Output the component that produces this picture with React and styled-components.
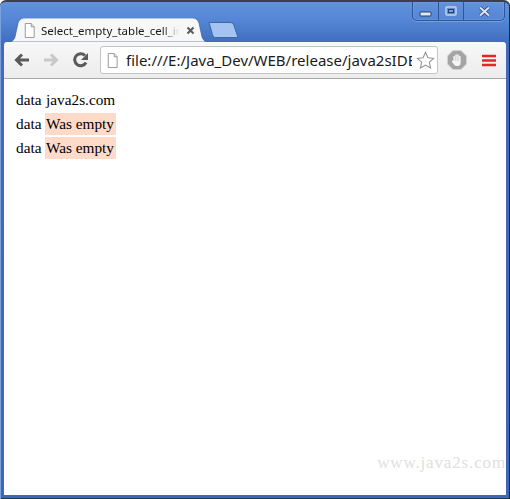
import styled, { createGlobalStyle } from "styled-components";

const Global = createGlobalStyle`
  html, body {
    margin: 0;
    padding: 0;
    background: #fff;
  }
`;

const Win = styled.div`
  width: 510px;
  height: 499px;
  box-sizing: border-box;
  display: flex;
  flex-direction: column;
  position: relative;
  overflow: hidden;
  padding: 0 4px 4px 4px;
  border-radius: 6px 6px 0 0;
  border-top: 2px solid #3a3f4a;
  background: linear-gradient(#6292dc 0, #5486d6 18px, #3f6cbc 42px, #3b68b8 100%);
  box-shadow: inset -1px 0 #26282e, inset 1px 0 #7ba0dc, inset 0 -1px #26384f;
`;

const TitleBar = styled.div`
  height: 40px;
  flex: none;
  display: flex;
  align-items: flex-end;
  padding-left: 5px;
`;

const Tab = styled.div`
  position: relative;
  width: 199px;
  height: 24px;
  display: flex;
  align-items: center;
  padding: 0 0 0 15px;
  box-sizing: border-box;
`;

const TabShape = styled.svg`
  position: absolute;
  left: 0;
  top: 0;
`;

const TabTitle = styled.span`
  position: relative;
  width: 138px;
  margin-left: 6px;
  overflow: hidden;
  white-space: nowrap;
  font: 11.5px "Noto Sans", "Liberation Sans", sans-serif;
  color: #1a1a1a;
  -webkit-mask-image: linear-gradient(to right, #000 122px, transparent 138px);
  mask-image: linear-gradient(to right, #000 122px, transparent 138px);
`;

const CloseX = styled.svg`
  position: relative;
  flex: none;
  margin-left: 7px;
`;

const NewTab = styled.svg`
  margin: 0 0 4px 0;
`;

const Controls = styled.div`
  position: absolute;
  top: 0;
  right: 5px;
  display: flex;
  height: 18px;
  box-sizing: content-box;
  border: 1px solid #2e5596;
  border-top: none;
  border-radius: 0 0 5px 5px;
  box-shadow: 0 1px rgba(190, 210, 245, 0.35), inset 0 0 0 1px rgba(160, 190, 235, 0.2);
`;

const Ctl = styled.div`
  width: ${(p) => p.$w}px;
  box-sizing: border-box;
  display: flex;
  align-items: center;
  justify-content: center;
  border-left: ${(p) => (p.$first ? "none" : "1px solid #2e5596")};
`;

const MinIcon = styled.svg`
  margin-top: 6px;
`;

const Toolbar = styled.div`
  height: 37px;
  flex: none;
  display: flex;
  align-items: center;
  box-sizing: border-box;
  padding: 0 0 0 10px;
  background: linear-gradient(#f8f8f8, #ececec);
  border-bottom: 1px solid #a9a9a9;
  border-radius: 3px 3px 0 0;
`;

const NavIcon = styled.svg`
  flex: none;
  margin-right: ${(p) => p.$mr}px;
`;

const Omnibox = styled.div`
  width: 338px;
  height: 28px;
  flex: none;
  box-sizing: border-box;
  background: #fff;
  border: 1px solid #c4c4c4;
  border-radius: 3px;
  display: flex;
  align-items: center;
  padding-left: 6px;
  margin-right: 9px;
`;

const Url = styled.div`
  width: 286px;
  margin: 0 4px 0 8px;
  overflow: hidden;
  white-space: nowrap;
  font: 15px "Noto Sans", "Liberation Sans", sans-serif;
  color: #1b1b1b;
`;

const Page = styled.div`
  flex: 1;
  position: relative;
  background: #fff;
  padding: 8px 8px 8px 9px;
  font: 15.3px/20px "Liberation Serif", "Times New Roman", serif;
  color: #000;
`;

const Table = styled.table`
  border-spacing: 2px;
  border-collapse: separate;
`;

const Cell = styled.td`
  padding: 1px;
  background: ${(p) => (p.$empty ? "#ffdac9" : "transparent")};
`;

const LabelCell = styled(Cell)`
  width: 26px;
`;

const Watermark = styled.div`
  position: absolute;
  right: 0;
  bottom: 22px;
  font: 17px "Liberation Serif", "Times New Roman", serif;
  letter-spacing: 0.85px;
  color: #e0e0e0;
`;

const DocSvg = styled.svg`
  flex: none;
  position: relative;
`;

const StarSvg = styled.svg`
  flex: none;
`;

const Doc = () => (
  <DocSvg width="11" height="15" viewBox="0 0 13 16" preserveAspectRatio="none">
    <path d="M1.5.5h7l3.5 3.5v11.500h-10.500z" fill="#fff" stroke="#8f8f8f" />
    <path d="M8.500.5v3.500h3.500" fill="#e8e8e8" stroke="#8f8f8f" />
  </DocSvg>
);

export default function App() {
  return (
    <Win>
      <Global />
      <TitleBar>
        <Tab>
          <TabShape width="199" height="24" viewBox="0 0 199 24">
            <path
              d="M0 24c3 0 5-2 6-5l3-14c1-3 3-5 6-5h169c3 0 5 2 6 5l3 14c1 3 3 5 6 5z"
              fill="#f7f7f7"
              stroke="#3a5f9e"
              strokeWidth="0.7"
            />
          </TabShape>
          <Doc />
          <TabTitle>Select_empty_table_cell_in</TabTitle>
          <CloseX width="9" height="9" viewBox="0 0 9 9">
            <path d="M1.500 1.500l6 6M7.500 1.500l-6 6" stroke="#5a5a5a" strokeWidth="2" />
          </CloseX>
        </Tab>
        <NewTab width="31" height="16" viewBox="0 0 31 16">
          <path
            d="M1 .5h21c2 0 3 1 4 3l4 12H7c-1 0-2-1-2.500-3z"
            fill="#a5c3f0"
            stroke="#3f66a8"
          />
        </NewTab>
      </TitleBar>
      <Controls>
        <Ctl $first $w={25}>
          <MinIcon width="13" height="6" viewBox="0 0 13 6">
            <rect x="1" y="1" width="11" height="4" rx="1" fill="#dfe8f6" stroke="#2a3f66" />
          </MinIcon>
        </Ctl>
        <Ctl $w={25}>
          <svg width="12" height="10" viewBox="0 0 12 10">
            <rect x="1" y="1" width="10" height="8" rx="1" fill="none" stroke="#c3d3ec" strokeWidth="1.500" />
            <rect x="3.500" y="3.500" width="5" height="3" fill="#7ea0d6" stroke="#2a3f66" />
          </svg>
        </Ctl>
        <Ctl $w={41}>
          <svg width="13" height="11" viewBox="0 0 13 11">
            <path d="M2 1.500l9 8M11 1.500l-9 8" stroke="#2a3f66" strokeWidth="3.600" />
            <path d="M2 1.500l9 8M11 1.500l-9 8" stroke="#d8e2f3" strokeWidth="2.200" />
          </svg>
        </Ctl>
      </Controls>
      <Toolbar>
        <NavIcon $mr={13} width="16" height="14" viewBox="0 0 16 14">
          <path d="M15 7H3M8 1.500L2.500 7 8 12.500" fill="none" stroke="#5a5a5a" strokeWidth="3" />
        </NavIcon>
        <NavIcon $mr={14} width="16" height="14" viewBox="0 0 16 14">
          <path d="M1 7h12M8 1.500L13.500 7 8 12.500" fill="none" stroke="#c8c8c8" strokeWidth="3" />
        </NavIcon>
        <NavIcon $mr={11} width="16" height="16" viewBox="0 0 16 16">
          <path d="M13 10.500A6 6 0 1 1 12 3.500" fill="none" stroke="#5a5a5a" strokeWidth="3" />
          <path d="M15 1v7H8z" fill="#5a5a5a" />
        </NavIcon>
        <Omnibox>
          <Doc />
          <Url>file:///E:/Java_Dev/WEB/release/java2sIDE</Url>
          <StarSvg width="19" height="18" viewBox="0 0 22 21">
            <path
              d="M11 1.500l2.800 6.300 6.700.7-5 4.600 1.400 6.700-5.900-3.400-5.900 3.400 1.400-6.700-5-4.600 6.700-.7z"
              fill="#fff"
              stroke="#8e8e8e"
              strokeWidth="1.200"
            />
          </StarSvg>
        </Omnibox>
        <NavIcon $mr={15} width="20" height="20" viewBox="0 0 20 20">
          <path d="M6 .5h8L19.500 6v8L14 19.500H6L.5 14V6z" fill="#a4a4a4" stroke="#d2d2d2" />
          <path
            d="M7.200 11V6.500M9.100 10V5M11 10V5M12.800 11V6.500"
            stroke="#f6f6f6"
            strokeWidth="1.500"
            strokeLinecap="round"
          />
          <path
            d="M6.500 10.500h7v3c0 1.500-1 2.500-2.500 2.500H9.500c-1 0-1.600-.5-2.200-1.300L5 12c-.5-.8.400-1.500 1-1z"
            fill="#f6f6f6"
          />
        </NavIcon>
        <NavIcon $mr={0} width="14" height="13" viewBox="0 0 14 13">
          <path d="M0 2h14M0 6.500h14M0 11h14" stroke="#e0282c" strokeWidth="2.600" />
        </NavIcon>
      </Toolbar>
      <Page>
        <Table>
          <tbody>
            <tr>
              <LabelCell>data</LabelCell>
              <Cell>java2s.com</Cell>
            </tr>
            <tr>
              <LabelCell>data</LabelCell>
              <Cell $empty>Was empty</Cell>
            </tr>
            <tr>
              <LabelCell>data</LabelCell>
              <Cell $empty>Was empty</Cell>
            </tr>
          </tbody>
        </Table>
        <Watermark>www.java2s.com</Watermark>
      </Page>
    </Win>
  );
}
